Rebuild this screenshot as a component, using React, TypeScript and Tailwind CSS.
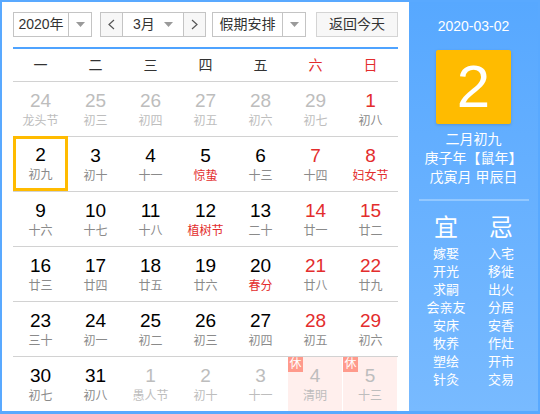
type Day = {
  n: number
  l: string
  out?: boolean
  wk?: boolean
  fest?: boolean
  rest?: boolean
  sel?: boolean
}

const weeks: Day[][] = [
  [
    { n: 24, l: '龙头节', out: true },
    { n: 25, l: '初三', out: true },
    { n: 26, l: '初四', out: true },
    { n: 27, l: '初五', out: true },
    { n: 28, l: '初六', out: true },
    { n: 29, l: '初七', out: true },
    { n: 1, l: '初八', wk: true },
  ],
  [
    { n: 2, l: '初九', sel: true },
    { n: 3, l: '初十' },
    { n: 4, l: '十一' },
    { n: 5, l: '惊蛰', fest: true },
    { n: 6, l: '十三' },
    { n: 7, l: '十四', wk: true },
    { n: 8, l: '妇女节', wk: true, fest: true },
  ],
  [
    { n: 9, l: '十六' },
    { n: 10, l: '十七' },
    { n: 11, l: '十八' },
    { n: 12, l: '植树节', fest: true },
    { n: 13, l: '二十' },
    { n: 14, l: '廿一', wk: true },
    { n: 15, l: '廿二', wk: true },
  ],
  [
    { n: 16, l: '廿三' },
    { n: 17, l: '廿四' },
    { n: 18, l: '廿五' },
    { n: 19, l: '廿六' },
    { n: 20, l: '春分', fest: true },
    { n: 21, l: '廿八', wk: true },
    { n: 22, l: '廿九', wk: true },
  ],
  [
    { n: 23, l: '三十' },
    { n: 24, l: '初一' },
    { n: 25, l: '初二' },
    { n: 26, l: '初三' },
    { n: 27, l: '初四' },
    { n: 28, l: '初五', wk: true },
    { n: 29, l: '初六', wk: true },
  ],
  [
    { n: 30, l: '初七' },
    { n: 31, l: '初八' },
    { n: 1, l: '愚人节', out: true },
    { n: 2, l: '初十', out: true },
    { n: 3, l: '十一', out: true },
    { n: 4, l: '清明', out: true, rest: true },
    { n: 5, l: '十三', out: true, rest: true },
  ],
]

const weekdays = ['一', '二', '三', '四', '五', '六', '日']

const yi = ['嫁娶', '开光', '求嗣', '会亲友', '安床', '牧养', '塑绘', '针灸']
const ji = ['入宅', '移徙', '出火', '分居', '安香', '作灶', '开市', '交易']

function Caret() {
  return (
    <svg width="9" height="5" viewBox="0 0 9 5">
      <path d="M0 0h9L4.5 5z" fill="#9a9a9a" />
    </svg>
  )
}

function Chevron({ right }: { right?: boolean }) {
  return (
    <svg width="7" height="11" viewBox="0 0 7 11">
      <path
        d={right ? 'M1 1l5 4.5L1 10' : 'M6 1L1 5.5 6 10'}
        fill="none"
        stroke="#555"
        strokeWidth="1.2"
      />
    </svg>
  )
}

function DayCell({ d }: { d: Day }) {
  const numColor = d.out ? 'text-[#bdbdbd]' : d.wk ? 'text-[#e32d2d]' : 'text-black'
  const lunarColor = d.out
    ? 'text-[#bdbdbd]'
    : d.fest
      ? 'text-[#e32d2d]'
      : 'text-[#8a8a8a]'
  return (
    <div
      className={`relative flex flex-col items-center ${d.rest ? 'bg-[#ffefed] mr-px' : ''} ${
        d.sel ? 'border-[3px] border-[#ffbb00] -mt-px pt-[5px]' : 'pt-2'
      }`}
    >
      {d.rest && (
        <span className="absolute left-0 top-0 w-[15px] h-[15px] bg-[#ff9a8c] text-white text-[12px] leading-[15px] text-center">
          休
        </span>
      )}
      <span className={`text-[19px] leading-[22px] ${numColor}`}>{d.n}</span>
      <span className={`text-[12px] leading-[18px] ${lunarColor}`}>{d.l}</span>
    </div>
  )
}

export default function App() {
  return (
    <div
      className="w-[540px] h-[414px] border-2 border-b-[3px] border-[#59a9ff] flex overflow-hidden"
      style={{ fontFamily: '"Liberation Sans", "Noto Sans CJK SC", sans-serif' }}
    >
      <div className="w-[407px] bg-white pl-[11px] pt-[10px] flex flex-col">
        <div className="flex items-center h-[25px] text-[14px] text-[#333] w-[385px]">
          <div className="w-[79px] h-[25px] border border-[#c4c4c4] flex">
            <span className="flex-1 flex items-center justify-center">2020年</span>
            <span className="w-[23px] border-l border-[#c4c4c4] flex items-center justify-center">
              <Caret />
            </span>
          </div>
          <div className="ml-2 w-[106px] h-[25px] border border-[#c4c4c4] flex">
            <span className="w-[22px] bg-[#f7f7f7] border-r border-[#c4c4c4] flex items-center justify-center">
              <Chevron />
            </span>
            <span className="flex-1 flex items-center justify-between pl-[10px] pr-[10px]">
              <span>3月</span>
              <Caret />
            </span>
            <span className="w-[22px] bg-[#f7f7f7] border-l border-[#c4c4c4] flex items-center justify-center">
              <Chevron right />
            </span>
          </div>
          <div className="ml-[6px] w-[94px] h-[25px] border border-[#c4c4c4] flex">
            <span className="flex-1 flex items-center justify-center">假期安排</span>
            <span className="w-[23px] border-l border-[#c4c4c4] flex items-center justify-center">
              <Caret />
            </span>
          </div>
          <div className="ml-auto w-[82px] h-[25px] border border-[#d4d4d4] bg-[#f7f7f7] flex items-center justify-center">
            返回今天
          </div>
        </div>

        <div className="w-[385px] mt-[10px] border-t-2 border-[#4fa3ff]">
          <div className="grid grid-cols-7 h-[33px] border-b border-[#d2d2d2] text-[14px]">
            {weekdays.map((w, i) => (
              <div
                key={w}
                className={`flex items-center justify-center ${i > 4 ? 'text-[#e32d2d]' : 'text-[#333]'}`}
              >
                {w}
              </div>
            ))}
          </div>
          {weeks.map((row, ri) => (
            <div key={ri} className="grid grid-cols-7 h-[55px] border-b border-[#d2d2d2]">
              {row.map((d, ci) => (
                <DayCell key={ci} d={d} />
              ))}
            </div>
          ))}
        </div>
      </div>

      <div className="flex-1 bg-gradient-to-b from-[#57a8ff] to-[#78baff] flex flex-col items-center text-white">
        <div className="mt-[14px] text-[14px] leading-[20px]">2020-03-02</div>
        <div className="mt-[14px] w-[75px] h-[74px] rounded-[2px] bg-[#ffbb00] shadow-[0_1px_3px_rgba(0,0,0,0.15)] flex items-center justify-center text-[60px] leading-none">
          2
        </div>
        <div className="mt-[6px] text-[14px] leading-[19px] text-center">
          <div>二月初九</div>
          <div>庚子年【鼠年】</div>
          <div>戊寅月 甲辰日</div>
        </div>
        <div className="mt-[12px] w-[110px] h-[2px] bg-[#93c8ff]" />
        <div className="mt-[12px] flex gap-[13px]">
          {[
            { t: '宜', items: yi },
            { t: '忌', items: ji },
          ].map(c => (
            <div key={c.t} className="flex flex-col items-center w-[42px]">
              <div className="text-[24px] leading-[30px]">{c.t}</div>
              <div className="text-[13px] leading-[18px] flex flex-col items-center mt-[2px]">
                {c.items.map(x => (
                  <span key={x} className="whitespace-nowrap">{x}</span>
                ))}
              </div>
            </div>
          ))}
        </div>
      </div>
    </div>
  )
}
